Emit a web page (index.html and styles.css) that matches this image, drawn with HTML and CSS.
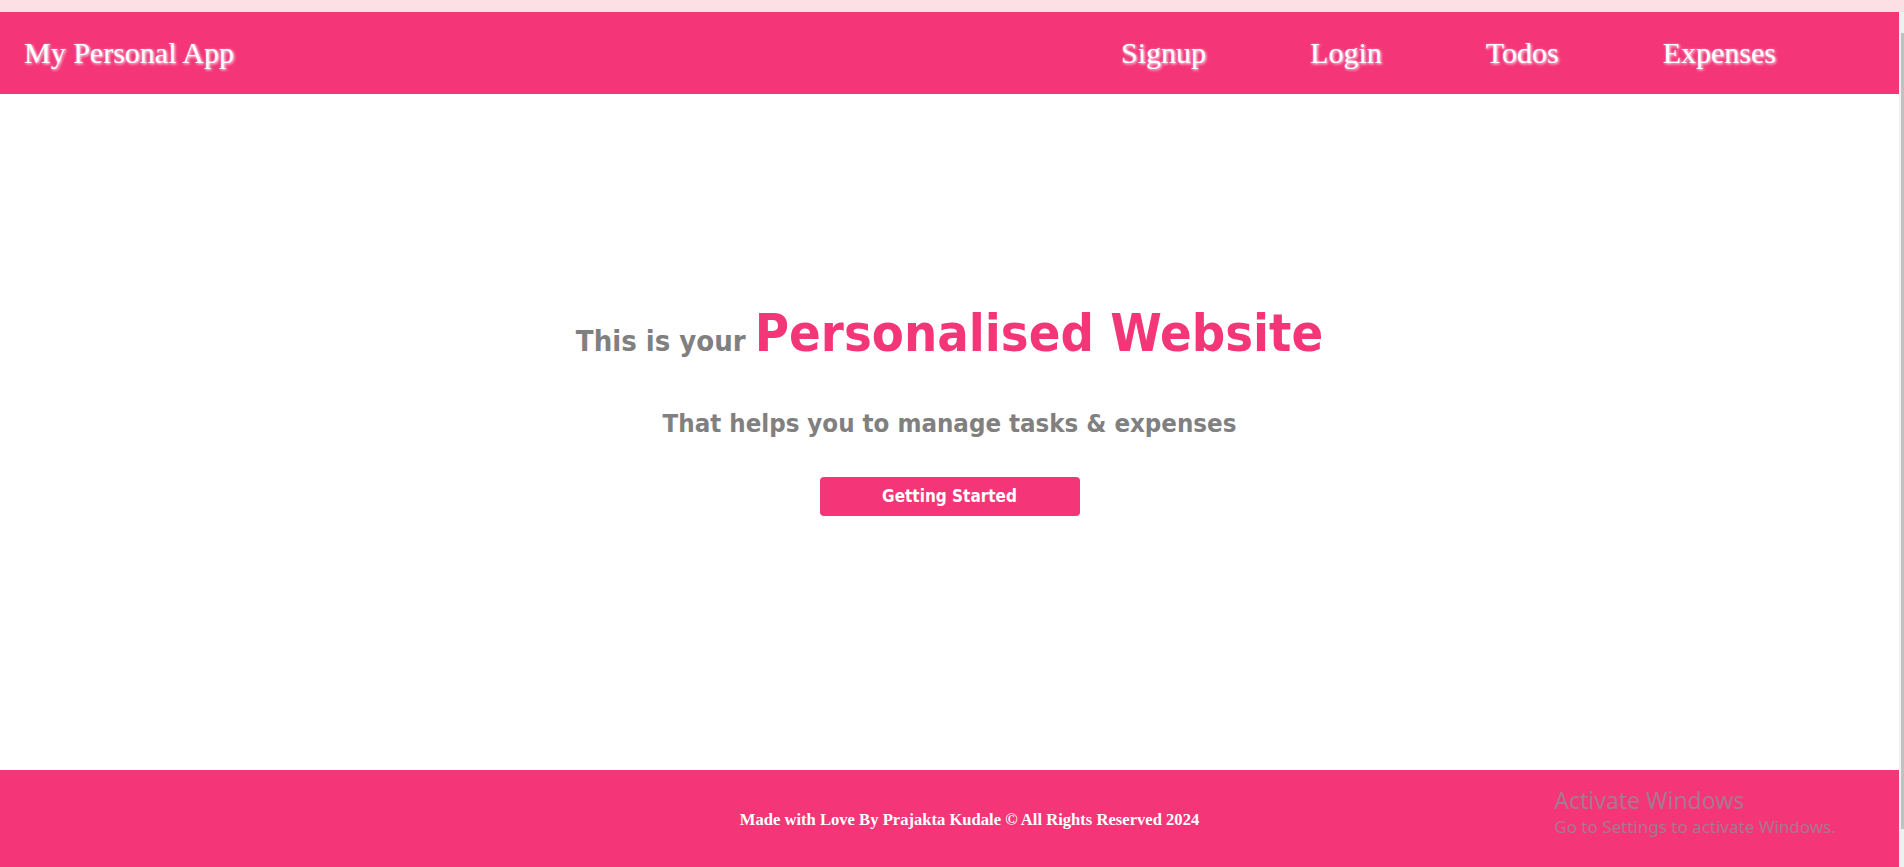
FILE: index.html
```html
<!DOCTYPE html>
<html lang="en">
<head>
<meta charset="utf-8">
<title>My Personal App</title>
<link rel="stylesheet" href="styles.css">
</head>
<body>
<div class="top-band"></div>
<div class="frame">
  <div class="app">
    <header class="navbar">
      <a class="brand" href="#">My Personal App</a>
      <nav class="nav-links">
        <a href="#">Signup</a>
        <a href="#">Login</a>
        <a href="#">Todos</a>
        <a href="#">Expenses</a>
      </nav>
    </header>
    <main class="hero">
      <h1 class="hero-title">This is your <span class="hero-accent">Personalised Website</span></h1>
      <h2 class="hero-sub">That helps you to manage tasks &amp; expenses</h2>
      <button class="hero-btn" type="button">Getting Started</button>
    </main>
    <footer class="footer">
      <p class="footer-text">Made with Love By Prajakta Kudale © All Rights Reserved 2024</p>
    </footer>
  </div>
  <div class="scrollbar">
    <div class="scroll-thumb"></div>
  </div>
</div>
<div class="watermark">
  <div class="wm-title">Activate Windows</div>
  <div class="wm-sub">Go to Settings to activate Windows.</div>
</div>
</body>
</html>
```
FILE: styles.css
```css
* { box-sizing: border-box; }
html, body { margin: 0; padding: 0; height: 100%; overflow: hidden; }
body {
  display: flex;
  flex-direction: column;
  background: #ffffff;
  font-family: "Liberation Serif", "Times New Roman", serif;
}
.top-band { height: 12px; background: #fde0e6; flex: none; }
.frame { flex: 1; display: flex; min-height: 0; }
.app { flex: 1; display: flex; flex-direction: column; min-width: 0; }
.scrollbar {
  width: 5px;
  background: #f1f1f1;
  display: flex;
  flex-direction: column;
  padding-top: 21px;
  padding-left: 2px;
}
.scroll-thumb { height: 796px; background: #c1c1c1; }

.navbar {
  height: 82px;
  background: #f43577;
  display: flex;
  align-items: center;
  justify-content: space-between;
  padding: 0 123px 0 24px;
}
.navbar a {
  color: #ffffff;
  text-decoration: none;
  font-size: 30px;
  text-shadow: 1px 1px 3px #ffffff;
}
.nav-links { display: flex; gap: 104px; }

.hero {
  flex: 1;
  display: flex;
  flex-direction: column;
  align-items: center;
  justify-content: center;
  padding-bottom: 46px;
  font-family: "DejaVu Sans Condensed", "Liberation Sans", sans-serif;
}
.hero-title {
  margin: 0;
  font-size: 29px;
  font-weight: bold;
  color: #808080;
  line-height: 1.2;
}
.hero-accent { color: #f43577; font-size: 52px; font-weight: bold; }
.hero-sub {
  margin: 43px 0 0;
  font-size: 25.6px;
  font-weight: bold;
  color: #808080;
}
.hero-btn {
  margin-top: 39px;
  width: 260px;
  height: 39px;
  border: none;
  border-radius: 4px;
  background: #f43577;
  color: #ffffff;
  font-family: inherit;
  font-weight: bold;
  font-size: 17px;
}

.footer {
  height: 97px;
  background: #f43577;
  display: flex;
  align-items: center;
  justify-content: center;
  padding: 2px 0 0 40px;
}
.footer-text {
  margin: 0;
  color: #ffffff;
  font-weight: bold;
  font-size: 16.6px;
}

.watermark {
  position: fixed;
  left: 1554px;
  top: 785px;
  font-family: "Noto Sans", "Open Sans", sans-serif;
  color: #a77b8f;
}
.wm-title { font-size: 23px; line-height: 30px; }
.wm-sub { font-size: 17px; line-height: 24px; }
```
